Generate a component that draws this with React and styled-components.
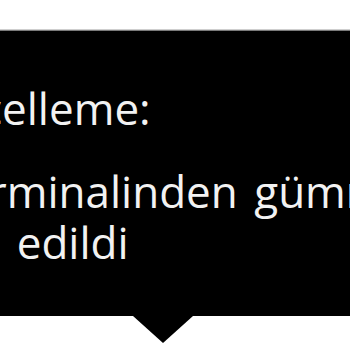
import React from "react";
import styled, { createGlobalStyle } from "styled-components";

const GlobalStyle = createGlobalStyle`
  html, body {
    margin: 0;
    padding: 0;
    background: #fff;
    overflow: hidden;
  }
`;

function App() {
  return (
    <>
      <GlobalStyle />
      <Stage>
        <Tooltip>
          <Title>Güncelleme:</Title>
          <Body>
            <Line>İç Terminalinden gümrük</Line>
            <Line>tahsil edildi</Line>
          </Body>
        </Tooltip>
      </Stage>
    </>
  );
}

const Stage = styled.div`
  width: 350px;
  height: 350px;
  padding-top: 30px;
  box-sizing: border-box;
  overflow: hidden;
  background: #fff;
`;

const Tooltip = styled.div`
  position: relative;
  box-sizing: border-box;
  width: 700px;
  height: 286px;
  margin-left: -105px;
  padding-top: 52px;
  background: #000;
  border-top: 1px solid #7a7a7a;
  box-shadow: 0 -1px 0 #cfcfcf;
  color: #f2f2f2;
  font-family: "Open Sans", "Noto Sans", sans-serif;
  font-size: 44px;
  line-height: 51px;

  &::after {
    content: "";
    position: absolute;
    left: 238px;
    top: 100%;
    border-style: solid;
    border-width: 27px 30px 0 30px;
    border-color: #000 transparent transparent transparent;
  }
`;

const Title = styled.div`
  margin-bottom: 32px;
  white-space: nowrap;
`;

const Body = styled.div`
  margin-left: -5px;
  white-space: nowrap;
  word-spacing: 5px;
`;

const Line = styled.div``;

export default App;
